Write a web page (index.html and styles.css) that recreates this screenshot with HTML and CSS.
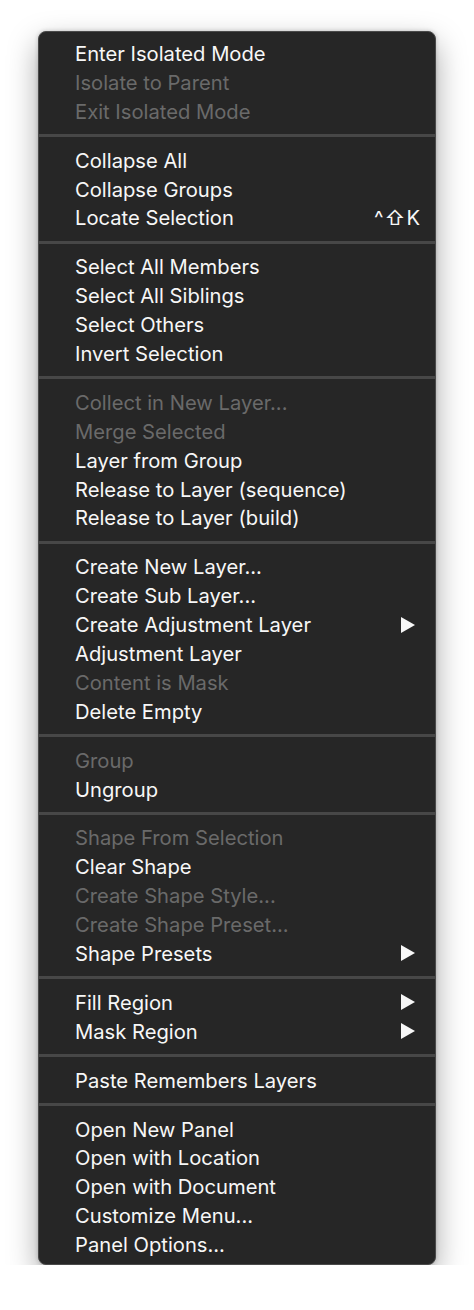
FILE: index.html
```html
<!DOCTYPE html>
<html lang="en">
<head>
    <meta charset="UTF-8">
    <meta name="viewport" content="width=device-width, initial-scale=1.0">
    <title>Layers Panel Menu</title>
    <link rel="stylesheet" href="styles.css">
</head>
<body>
    <div class="menu">
        <div class="group">
            <div class="item">Enter Isolated Mode</div>
            <div class="item disabled">Isolate to Parent</div>
            <div class="item disabled">Exit Isolated Mode</div>
        </div>
        <div class="sep"></div>
        <div class="group">
            <div class="item">Collapse All</div>
            <div class="item">Collapse Groups</div>
            <div class="item">Locate Selection <span class="shortcut">^⇧K</span></div>
        </div>
        <div class="sep"></div>
        <div class="group">
            <div class="item">Select All Members</div>
            <div class="item">Select All Siblings</div>
            <div class="item">Select Others</div>
            <div class="item">Invert Selection</div>
        </div>
        <div class="sep"></div>
        <div class="group">
            <div class="item disabled">Collect in New Layer...</div>
            <div class="item disabled">Merge Selected</div>
            <div class="item">Layer from Group</div>
            <div class="item">Release to Layer (sequence)</div>
            <div class="item">Release to Layer (build)</div>
        </div>
        <div class="sep"></div>
        <div class="group">
            <div class="item">Create New Layer...</div>
            <div class="item">Create Sub Layer...</div>
            <div class="item submenu">Create Adjustment Layer</div>
            <div class="item">Adjustment Layer</div>
            <div class="item disabled">Content is Mask</div>
            <div class="item">Delete Empty</div>
        </div>
        <div class="sep"></div>
        <div class="group">
            <div class="item disabled">Group</div>
            <div class="item">Ungroup</div>
        </div>
        <div class="sep"></div>
        <div class="group">
            <div class="item disabled">Shape From Selection</div>
            <div class="item">Clear Shape</div>
            <div class="item disabled">Create Shape Style...</div>
            <div class="item disabled">Create Shape Preset...</div>
            <div class="item submenu">Shape Presets</div>
        </div>
        <div class="sep"></div>
        <div class="group">
            <div class="item submenu">Fill Region</div>
            <div class="item submenu">Mask Region</div>
        </div>
        <div class="sep"></div>
        <div class="group">
            <div class="item">Paste Remembers Layers</div>
        </div>
        <div class="sep"></div>
        <div class="group">
            <div class="item">Open New Panel</div>
            <div class="item">Open with Location</div>
            <div class="item">Open with Document</div>
            <div class="item">Customize Menu...</div>
            <div class="item">Panel Options...</div>
        </div>
    </div>
</body>
</html>
```

FILE: styles.css
```css
body {
    margin: 0;
    background-color: #ffffff;
    font-family: Inter, "Noto Sans", sans-serif;
}
.menu {
    width: 396px;
    margin: 31px 0 0 38px;
    padding: 7px 0 5px;
    background-color: #262626;
    border: 1px solid #4a4a4a;
    border-radius: 8px;
    box-shadow: 0 12px 30px rgba(0,0,0,0.35), 0 0 4px rgba(0,0,0,0.2);
}
.item {
    display: flex;
    align-items: center;
    justify-content: space-between;
    height: 28.9px;
    padding: 0 20px 0 36px;
    font-size: 20.2px;
    color: #f7f7f7;
    white-space: nowrap;
}
.item.disabled { color: #6a6a6a; }
.shortcut {
    letter-spacing: 1px;
    margin-right: -6px;
}
.submenu::after {
    content: "";
    width: 0;
    height: 0;
    border-top: 8px solid transparent;
    border-bottom: 8px solid transparent;
    border-left: 14px solid #f7f7f7;
}
.sep {
    height: 3px;
    margin: 8.5px 0;
    background-color: #474747;
}
```
